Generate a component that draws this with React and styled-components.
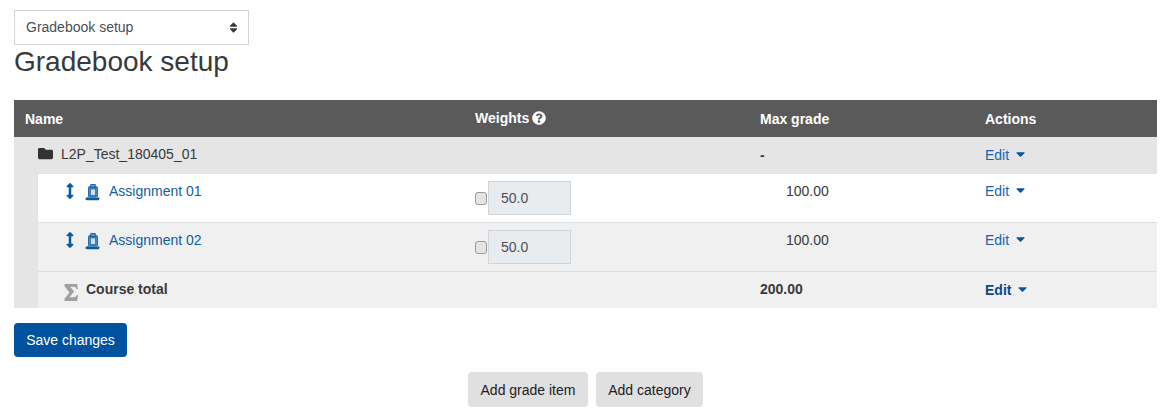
import React from 'react';
import styled, { createGlobalStyle } from 'styled-components';
import { FaFolder, FaQuestionCircle, FaSort, FaCaretDown, FaArrowsAltV } from 'react-icons/fa';

const Global = createGlobalStyle`
  html, body { margin: 0; padding: 0; background: #fff; }
  body { font-family: "Liberation Sans", Arial, sans-serif; font-size: 14px; color: #373a3c; overflow: hidden; }
`;

const Page = styled.div`
  width: 1171px;
  height: 417px;
  box-sizing: border-box;
  padding: 10px 14px 0;
`;

const Select = styled.div`
  width: 235px;
  height: 35px;
  box-sizing: border-box;
  border: 1px solid #ced4da;
  display: flex;
  align-items: center;
  justify-content: space-between;
  padding: 0 8px 2px 11px;
  font-size: 14px;
  color: #495057;
  svg { font-size: 13px; color: #343a40; margin-top: 2px; }
`;

const Title = styled.h2`
  margin: 0;
  height: 55px;
  font-size: 28px;
  line-height: 34px;
  font-weight: 400;
  color: #373a3c;
`;

const Table = styled.div`
  width: 1143px;
  background: #e5e5e5;
`;

const HeadRow = styled.div`
  display: grid;
  grid-template-columns: 450px 285px 225px 183px;
  height: 37px;
  background: #5a5a5a;
  color: #fff;
  font-weight: 700;
  font-size: 14px;
`;

const HeadCell = styled.div`
  padding: ${p => (p.$raised ? '10px' : '11px')} 11px 0;
  line-height: 16px;
  display: flex;
  align-items: flex-start;
  gap: 3px;
  svg { font-size: 14px; margin-top: 1px; }
`;

const Row = styled.div`
  display: grid;
  grid-template-columns: ${p => (p.$indent ? '426px' : '450px')} 285px 225px 183px;
  height: ${p => p.$h}px;
  margin-left: ${p => (p.$indent ? '24px' : '0')};
  background: ${p => p.$bg};
  border-top: ${p => (p.$line ? '1px solid #dedede' : 'none')};
  box-sizing: border-box;
`;

const Cell = styled.div`
  padding: ${p => p.$top ?? 10}px 11px 0;
  line-height: 16px;
  font-size: 14px;
  color: #373a3c;
  font-weight: ${p => (p.$bold ? 700 : 400)};
`;

const NameCell = styled.div`
  display: flex;
  align-items: flex-start;
  line-height: 16px;
  font-size: 14px;
  padding: ${p => p.$top ?? 9}px 0 0 ${p => p.$left ?? 28}px;
  font-weight: ${p => (p.$bold ? 700 : 400)};
`;

const FolderIcon = styled(FaFolder)`
  font-size: 15px;
  color: #333;
  margin: 0 8px 0 -3px;
`;

const MoveIcon = styled(FaArrowsAltV)`
  font-size: 16px;
  color: #0a5a9c;
  width: 8px;
  margin: 0 11px 0 0;
  flex: none;
`;

const ItemSvg = styled.svg`
  width: 15px;
  height: 17px;
  margin: 1px 9px 0 0;
  flex: none;
`;

const SigmaSvg = styled.svg`
  width: 14px;
  height: 18px;
  margin: 2px 8px 0 -2px;
  flex: none;
`;

const ItemLink = styled.a`
  color: #0f5ea8;
  text-decoration: none;
`;

const WeightCell = styled.div`
  display: flex;
  align-items: flex-start;
  padding: 7px 0 0 11px;
`;

const Check = styled.span`
  width: 12px;
  height: 13px;
  box-sizing: border-box;
  border: 1px solid #9a9a9a;
  border-radius: 3px;
  background: #e4e4e4;
  margin: 11px 1px 0 0;
`;

const WeightInput = styled.div`
  width: 83px;
  height: 34px;
  box-sizing: border-box;
  border: 1px solid #ced4da;
  background: #e9ecef;
  color: #495057;
  font-size: 14px;
  line-height: 33px;
  padding-left: 12px;
`;

const MaxValue = styled.span`
  display: block;
  padding-left: 26px;
`;

const EditLink = styled.a`
  display: inline-flex;
  align-items: center;
  color: ${p => (p.$bold ? '#0a4a8c' : '#1565ad')};
  font-weight: ${p => (p.$bold ? 700 : 400)};
  svg { font-size: 14px; width: 11px; color: #0a559e; margin: -2px 0 0 6px; }
`;

const SaveRow = styled.div`
  margin-top: 15px;
`;

const SaveButton = styled.button`
  width: 113px;
  height: 34px;
  border: none;
  border-radius: 4px;
  background: #01539f;
  color: #fff;
  font: 400 14px "Liberation Sans", Arial, sans-serif;
  padding: 0;
`;

const ActionRow = styled.div`
  display: flex;
  justify-content: center;
  gap: 8px;
  margin-top: 15px;
  width: 1143px;
`;

const GreyButton = styled.button`
  height: 35px;
  width: ${p => p.$w}px;
  border: none;
  border-radius: 4px;
  background: #e0e0e0;
  color: #1d2125;
  font: 400 14px "Liberation Sans", Arial, sans-serif;
  padding: 0;
`;

const AssignmentIcon = () => (
  <ItemSvg viewBox="0 0 15 17">
    <rect x="3.6" y="2.6" width="8.8" height="10.6" rx="0.8" fill="#4f8fcb" stroke="#1d5f9f" strokeWidth="1" />
    <rect x="5.8" y="0.6" width="4.4" height="3" fill="#5b9ad3" stroke="#0f5599" strokeWidth="0.9" />
    <rect x="5.4" y="5" width="5.2" height="6.4" fill="#cfe0f1" stroke="#2b6dac" strokeWidth="0.8" />
    <path d="M0.4 14.8c.4-1.4 1.6-1.8 3-1.6l1.4.7h6.4l3-.6c.5 1 .3 2.2-.6 2.9H2.2c-1 0-1.9-.4-1.8-1.4z" fill="#0c5aa3" />
  </ItemSvg>
);

const SigmaIcon = () => (
  <SigmaSvg viewBox="0 0 14 18">
    <path d="M0.6 1h12.6l.6 5h-1.4c-.5-1.6-1.3-2.2-3-2.2H6.2l3.9 4.8-4.6 5.6h4.3c1.7 0 2.5-.6 3.1-2.2h1.2l-1 5.9H0.5v-2.2l5-6.1L0.6 3.4z" fill="#a0a0a0" />
  </SigmaSvg>
);

const Edit = ({ bold }) => (
  <EditLink $bold={bold}>Edit<FaCaretDown /></EditLink>
);

const ItemRow = ({ name, bg, line }) => (
  <Row $indent $h={line ? 49 : 48} $bg={bg} $line={line}>
    <NameCell>
      <MoveIcon />
      <AssignmentIcon />
      <ItemLink>{name}</ItemLink>
    </NameCell>
    <WeightCell>
      <Check />
      <WeightInput>50.0</WeightInput>
    </WeightCell>
    <Cell $top={9}><MaxValue>100.00</MaxValue></Cell>
    <Cell $top={9}><Edit /></Cell>
  </Row>
);

export default function App() {
  return (
    <Page>
      <Global />
      <Select>Gradebook setup<FaSort /></Select>
      <Title>Gradebook setup</Title>
      <Table>
        <HeadRow>
          <HeadCell>Name</HeadCell>
          <HeadCell $raised>Weights<FaQuestionCircle /></HeadCell>
          <HeadCell>Max grade</HeadCell>
          <HeadCell>Actions</HeadCell>
        </HeadRow>
        <Row $h={37} $bg="#e5e5e5">
          <NameCell $left={27} $top={9}>
            <FolderIcon />
            L2P_Test_180405_01
          </NameCell>
          <div />
          <Cell $bold>-</Cell>
          <Cell><Edit /></Cell>
        </Row>
        <ItemRow name="Assignment 01" bg="#fff" />
        <ItemRow name="Assignment 02" bg="#f0f0f0" line />
        <Row $indent $h={37} $bg="#f0f0f0" $line>
          <NameCell $bold>
            <SigmaIcon />
            Course total
          </NameCell>
          <div />
          <Cell $bold $top={9}>200.00</Cell>
          <Cell $top={10}><Edit bold /></Cell>
        </Row>
      </Table>
      <SaveRow><SaveButton>Save changes</SaveButton></SaveRow>
      <ActionRow>
        <GreyButton $w={120}>Add grade item</GreyButton>
        <GreyButton $w={107}>Add category</GreyButton>
      </ActionRow>
    </Page>
  );
}
